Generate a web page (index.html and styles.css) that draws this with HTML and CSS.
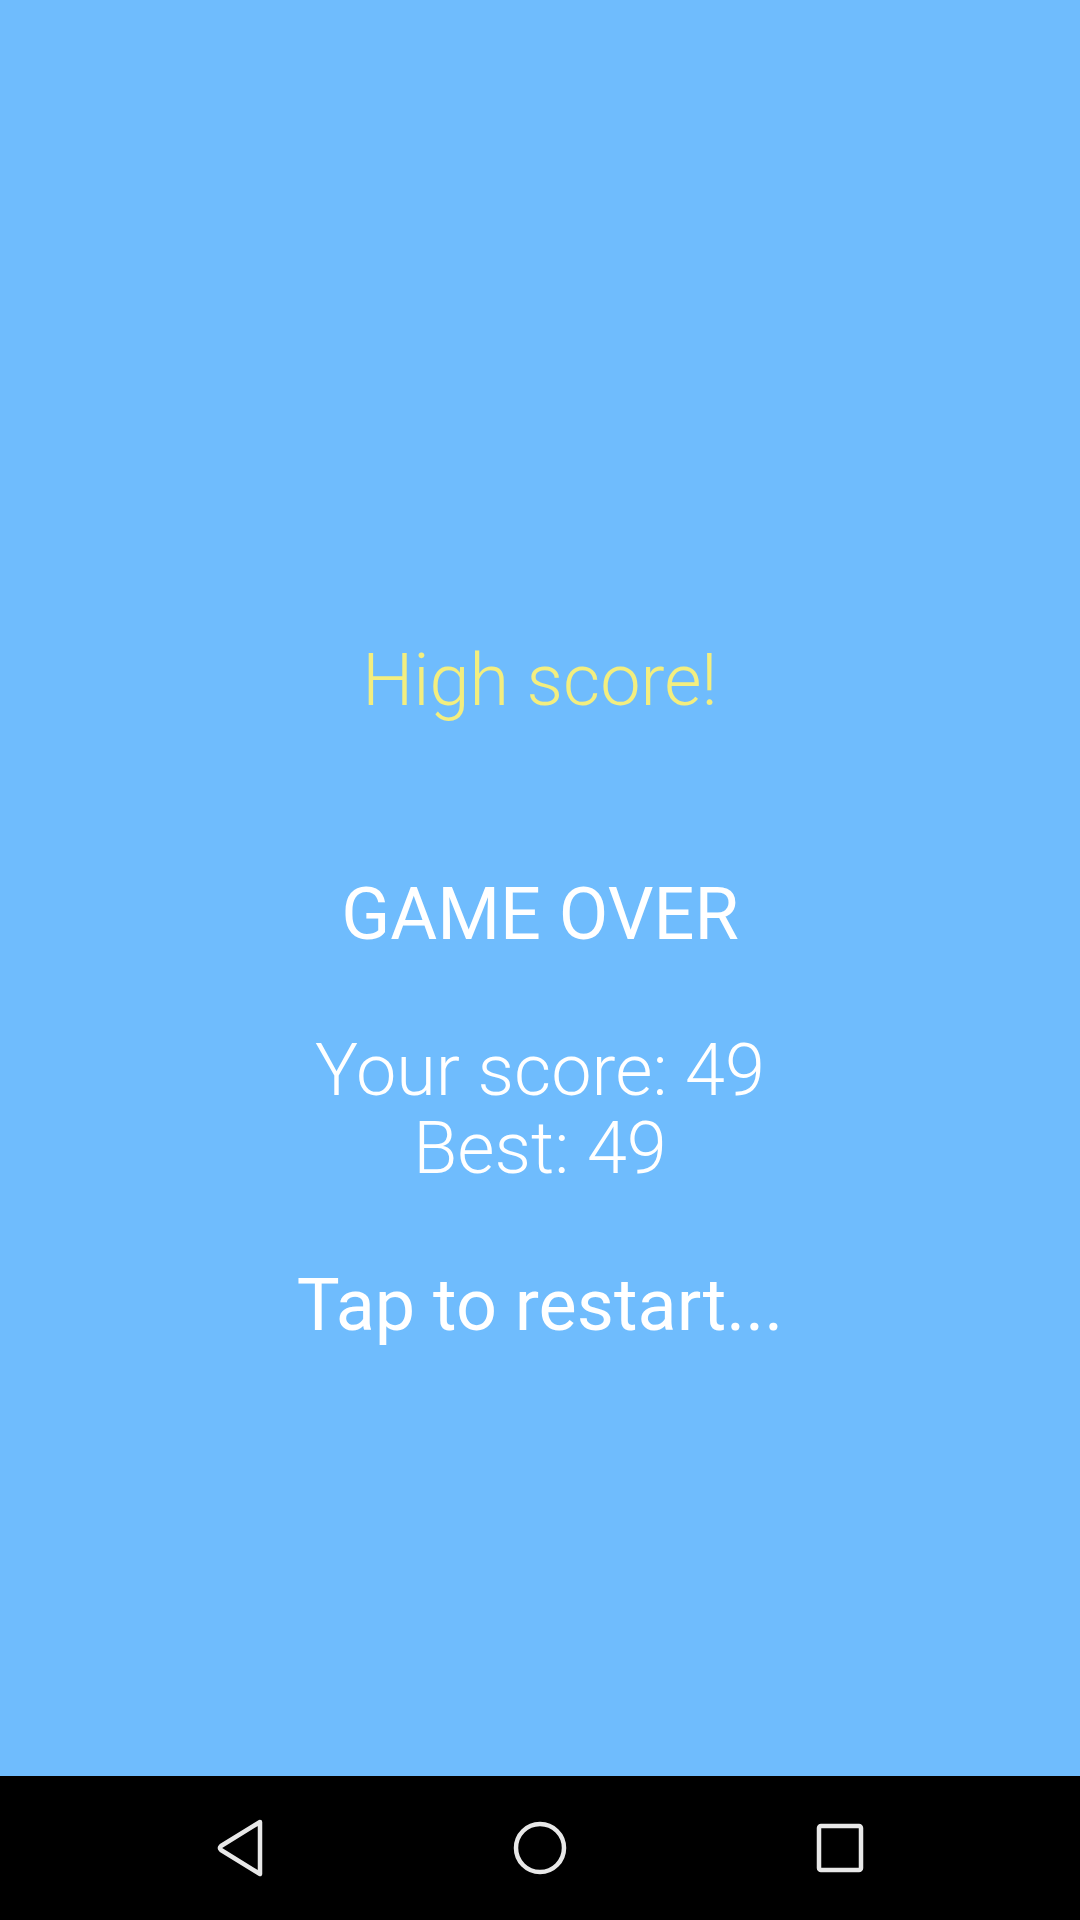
FILE: index.html
```html
<!DOCTYPE html>
<html lang="en">
<head>
<meta charset="UTF-8" /><meta name="viewport"
content="width=device-width, initial-scale=1.0" />
<title>Game Over</title>
<link rel="stylesheet" href="styles.css">
</head>
<body>
<div id="game">
<div class="high">High score!</div>
<div class="over">GAME OVER</div>
<div class="score">Your score: <span id="score">49</span></div>
<div class="score">Best: <span id="best">49</span></div>
<div class="tap">Tap to restart...</div>
</div>
<div id="nav">
<svg class="key" width="60" height="64" viewBox="0 0 60 64"><path d="M50 6 L11 30 Q9 32 11 34 L50 58 Z" fill="none" stroke="#e8e8e8" stroke-width="4.5" stroke-linejoin="round"/></svg>
<svg class="key" width="60" height="64" viewBox="0 0 60 64"><circle cx="30" cy="32" r="24" fill="none" stroke="#e8e8e8" stroke-width="4.5"/></svg>
<svg class="key" width="60" height="64" viewBox="0 0 60 64"><rect x="9" y="10" width="42" height="44" rx="2" fill="none" stroke="#e8e8e8" stroke-width="4.5"/></svg>
</div>
</body>
</html>
```
FILE: styles.css
```css
body { margin: 0; background: #000; font-family: Roboto, "Noto Sans", sans-serif; }
#game { height: 1776px; box-sizing: border-box; padding-top: 642px; background: #6fbcfd;
color: #fff; text-align: center; font-size: 72px; line-height: 78px; }
.high { color: #f3ee7f; font-weight: 300; }
.over { margin-top: 156px; font-weight: 400; }
.score { font-weight: 300; }
.over + .score { margin-top: 78px; }
.tap { margin-top: 79px; font-weight: 400; }
#nav { height: 144px; display: flex; justify-content: center; align-items: center; gap: 240px; }
.key { display: block; }
```
